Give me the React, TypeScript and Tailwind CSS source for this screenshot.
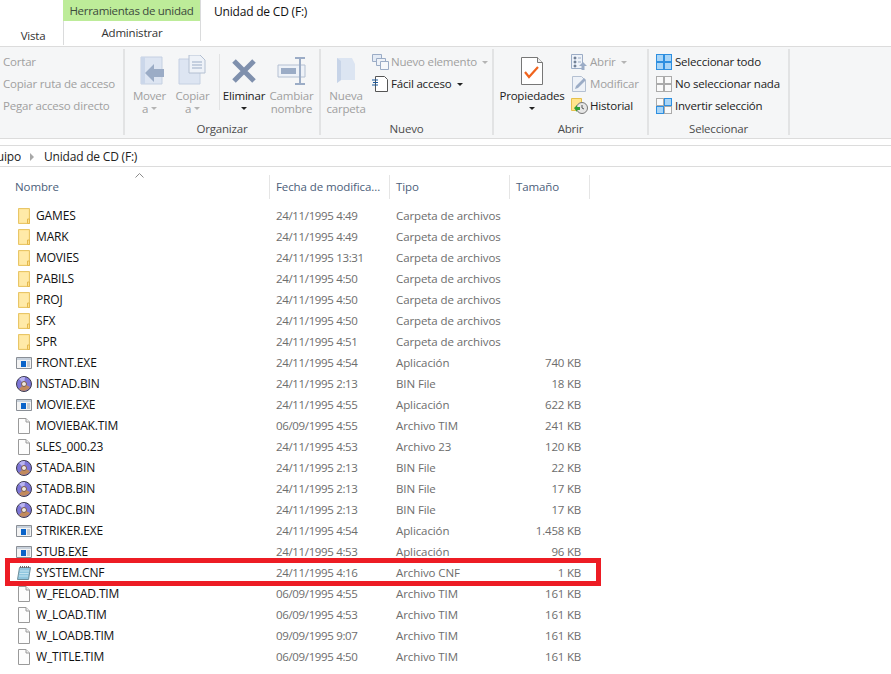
import React from "react";

type Kind = "folder" | "exe" | "disc" | "file" | "note";

interface Row {
  name: string;
  date: string;
  type: string;
  size?: string;
  kind: Kind;
}

const rows: Row[] = [
  { name: "GAMES", date: "24/11/1995 4:49", type: "Carpeta de archivos", kind: "folder" },
  { name: "MARK", date: "24/11/1995 4:49", type: "Carpeta de archivos", kind: "folder" },
  { name: "MOVIES", date: "24/11/1995 13:31", type: "Carpeta de archivos", kind: "folder" },
  { name: "PABILS", date: "24/11/1995 4:50", type: "Carpeta de archivos", kind: "folder" },
  { name: "PROJ", date: "24/11/1995 4:50", type: "Carpeta de archivos", kind: "folder" },
  { name: "SFX", date: "24/11/1995 4:50", type: "Carpeta de archivos", kind: "folder" },
  { name: "SPR", date: "24/11/1995 4:51", type: "Carpeta de archivos", kind: "folder" },
  { name: "FRONT.EXE", date: "24/11/1995 4:54", type: "Aplicación", size: "740 KB", kind: "exe" },
  { name: "INSTAD.BIN", date: "24/11/1995 2:13", type: "BIN File", size: "18 KB", kind: "disc" },
  { name: "MOVIE.EXE", date: "24/11/1995 4:55", type: "Aplicación", size: "622 KB", kind: "exe" },
  { name: "MOVIEBAK.TIM", date: "06/09/1995 4:55", type: "Archivo TIM", size: "241 KB", kind: "file" },
  { name: "SLES_000.23", date: "24/11/1995 4:53", type: "Archivo 23", size: "120 KB", kind: "file" },
  { name: "STADA.BIN", date: "24/11/1995 2:13", type: "BIN File", size: "22 KB", kind: "disc" },
  { name: "STADB.BIN", date: "24/11/1995 2:13", type: "BIN File", size: "17 KB", kind: "disc" },
  { name: "STADC.BIN", date: "24/11/1995 2:13", type: "BIN File", size: "17 KB", kind: "disc" },
  { name: "STRIKER.EXE", date: "24/11/1995 4:54", type: "Aplicación", size: "1.458 KB", kind: "exe" },
  { name: "STUB.EXE", date: "24/11/1995 4:53", type: "Aplicación", size: "96 KB", kind: "exe" },
  { name: "SYSTEM.CNF", date: "24/11/1995 4:16", type: "Archivo CNF", size: "1 KB", kind: "note" },
  { name: "W_FELOAD.TIM", date: "06/09/1995 4:55", type: "Archivo TIM", size: "161 KB", kind: "file" },
  { name: "W_LOAD.TIM", date: "06/09/1995 4:53", type: "Archivo TIM", size: "161 KB", kind: "file" },
  { name: "W_LOADB.TIM", date: "09/09/1995 9:07", type: "Archivo TIM", size: "161 KB", kind: "file" },
  { name: "W_TITLE.TIM", date: "06/09/1995 4:50", type: "Archivo TIM", size: "161 KB", kind: "file" },
];

const FileIcon = ({ kind }: { kind: Kind }) => {
  if (kind === "folder") {
    return (
      <svg width="16" height="16" viewBox="0 0 16 16">
        <path d="M2.5.5h11v15h-11z" fill="#ffe08c" stroke="#e8c668" />
        <path d="M3.5 1.5h9v13h-9z" fill="#ffeaa8" />
        <path d="M11.5 11h2v4.5h-2z" fill="#ffe08c" stroke="#e4b94e" />
      </svg>
    );
  }
  if (kind === "exe") {
    return (
      <svg width="16" height="16" viewBox="0 0 16 16">
        <path d="M.5 2.5h15v11H.5z" fill="#f3f3f3" stroke="#8a8f96" />
        <path d="M1 3h14v2H1z" fill="#c9d2dc" />
        <path d="M5 6h5v6H5z" fill="#0a63c9" />
        <path d="M11 7h3M11 9h3M11 11h3" stroke="#9aa3ad" />
      </svg>
    );
  }
  if (kind === "disc") {
    return (
      <svg width="16" height="16" viewBox="0 0 16 16">
        <circle cx="8" cy="8" r="7.5" fill="#7d76d8" stroke="#3c3a4c" />
        <path d="M8 8 14 11A7 7 0 0 1 3 13Z" fill="#c28a5c" />
        <path d="M8 8 3 3A7 7 0 0 1 9 1Z" fill="#b9b4f0" />
        <circle cx="8" cy="8" r="2.5" fill="#efe8e0" stroke="#7a5a48" />
      </svg>
    );
  }
  if (kind === "note") {
    return (
      <svg width="16" height="16" viewBox="0 0 16 16">
        <path d="M3.5 2.5h11l-2 12H1.5z" fill="#8fc6de" stroke="#6f8f9c" />
        <path d="M4 6h9M3.5 8.5h9M3 11h9" stroke="#c4e4f0" />
        <path d="M4 2h10" stroke="#6a6a6a" strokeWidth="2" strokeDasharray="1 1" />
      </svg>
    );
  }
  return (
    <svg width="16" height="16" viewBox="0 0 16 16">
      <path d="M2.5.5h7.5l3.5 3.5v11.5h-11z" fill="#fdfdfd" stroke="#9a9a9a" />
      <path d="M10 .5v3.5h3.5" fill="#f0f0f0" stroke="#9a9a9a" />
    </svg>
  );
};

const Caret = ({ on }: { on?: boolean }) => (
  <span
    className={`inline-block w-0 h-0 border-x-[3px] border-x-transparent border-t-[3px] ${on ? "border-t-[#222222]" : "border-t-[#b4b4b4]"}`}
  />
);

const Group = ({ label, width, children }: { label?: string; width: string; children: React.ReactNode }) => (
  <div className={`${width} h-[86px] mt-[2px] border-r-2 border-[#e2e3e4] flex flex-col shrink-0`}>
    <div className="h-[72px] shrink-0 flex overflow-hidden">{children}</div>
    <div className="text-center text-[#4c4c4c] leading-[16px]">{label}</div>
  </div>
);

const Small = ({ icon, text, on, caret }: { icon?: React.ReactNode; text: string; on?: boolean; caret?: boolean }) => (
  <div className={`h-[22px] flex items-center whitespace-nowrap ${on ? "text-[#222222]" : "text-[#a0a0a0]"}`}>
    {icon && <span className="w-[18px] h-[16px] mr-[2px] flex items-center justify-center shrink-0">{icon}</span>}
    <span>{text}</span>
    {caret && <span className="ml-[5px] flex"><Caret on={on} /></span>}
  </div>
);

const Large = ({ icon, line1, line2, caret, on, width }: { icon: React.ReactNode; line1: string; line2?: string; caret?: boolean; on?: boolean; width: string }) => (
  <div className={`${width} flex flex-col items-center shrink-0 pt-[5px] leading-[13px] whitespace-nowrap ${on ? "text-[#222222]" : "text-[#a0a0a0]"}`}>
    <div className="h-[34px] flex items-center justify-center">{icon}</div>
    <div className="mt-[1px]">{line1}</div>
    <div className="h-[13px] flex items-center gap-[3px]">
      {line2 && <span>{line2}</span>}
      {caret && <Caret on={on} />}
    </div>
  </div>
);

const Grid4 = ({ cells }: { cells: boolean[] }) => (
  <svg width="16" height="16" viewBox="0 0 16 16">
    {[0, 1, 2, 3].map((i) => {
      const x = i % 2 === 0 ? 0.5 : 8.5;
      const y = i < 2 ? 0.5 : 8.5;
      return (
        <rect
          key={i}
          x={x}
          y={y}
          width="7"
          height="7"
          fill={cells[i] ? "#a9d5f7" : "#fafafa"}
          stroke={cells[i] ? "#2e8fe0" : "#ababab"}
        />
      );
    })}
  </svg>
);

const App = () => {
  return (
    <div className="relative w-[891px] h-[674px] bg-white overflow-hidden text-[11.5px] font-['Open_Sans','Noto_Sans',sans-serif] tracking-[-0.2px]">
      {/* title and tabs */}
      <div className="h-[46px] flex">
        <div className="w-[63px] pt-[28px] pl-[3px] text-center text-[#333333] leading-[16px]">Vista</div>
        <div className="w-[138px] h-[41px] border-r border-[#dadbdc] flex flex-col">
          <div className="h-[23px] bg-[#bdec99] text-center text-[#3c4a3c] leading-[21px] tracking-[-0.3px]">Herramientas de unidad</div>
          <div className="flex-1 border-l border-[#dadbdc] text-center text-[#333333] leading-[24px]">Administrar</div>
        </div>
        <div className="ml-[13px] pt-[3px] text-[12px] text-[#111111] leading-[18px]">Unidad de CD (F:)</div>
      </div>

      {/* ribbon */}
      <div className="h-[93px] bg-[#f5f6f7] border-y border-[#dcdcdc] flex">
        <Group width="w-[125px]" label="">
          <div className="pl-[3px] pt-[2px]">
            <Small text="Cortar" />
            <Small text="Copiar ruta de acceso" />
            <Small text="Pegar acceso directo" />
          </div>
        </Group>

        <Group width="w-[196px]" label="Organizar">
          <div className="flex">
            <Large
              width="w-[49px]"
              line1="Mover"
              line2="a"
              caret
              icon={
                <svg width="30" height="32" viewBox="0 0 30 32">
                  <path d="M6 2h21v27H6z" fill="#dde5f2" stroke="#c5d0e2" />
                  <path d="M6 2v27h4V2z" fill="#cbd7ea" />
                  <path d="M29 14h-10V9l-9 9 9 9v-5h10z" fill="#9bacc6" />
                </svg>
              }
            />
            <Large
              width="w-[37px]"
              line1="Copiar"
              line2="a"
              caret
              icon={
                <svg width="30" height="32" viewBox="0 0 30 32">
                  <path d="M1 4h21v25H1z" fill="#dde5f2" stroke="#c5d0e2" />
                  <path d="M11 0h11l5 5v13H11z" fill="#eef2f8" stroke="#b4c0d2" />
                  <path d="M14 7h10M14 10h10M14 13h10" stroke="#9bacc6" />
                </svg>
              }
            />
            <div className="w-[1px] h-[56px] bg-[#e2e3e4] ml-[8px] mt-[5px]" />
            <Large
              on
              width="w-[48px]"
              line1="Eliminar"
              caret
              icon={
                <svg width="26" height="26" viewBox="0 0 26 26">
                  <path d="M3 3l20 20M23 3 3 23" stroke="#7f90ad" strokeWidth="5" />
                </svg>
              }
            />
            <Large
              width="w-[47px]"
              line1="Cambiar"
              line2="nombre"
              icon={
                <svg width="30" height="28" viewBox="0 0 30 28">
                  <path d="M1 8h27v12H1z" fill="#eef2f8" stroke="#b4c0d2" />
                  <path d="M4 11h15v6H4z" fill="#9bacc6" />
                  <path d="M23 1v26M18 1h10M18 27h10" stroke="#9bacc6" strokeWidth="2" />
                </svg>
              }
            />
          </div>
        </Group>

        <Group width="w-[173px]" label="Nuevo">
          <Large
            width="w-[50px]"
            line1="Nueva"
            line2="carpeta"
            icon={
              <svg width="22" height="30" viewBox="0 0 22 30">
                <path d="M2 2h15l3 6v16H6l-4 3z" fill="#dce5f2" />
                <path d="M2 2l4 3v19l-4 3z" fill="#c7d4e8" />
              </svg>
            }
          />
          <div className="pt-[2px]">
            <Small
              text="Nuevo elemento"
              caret
              icon={
                <svg width="17" height="16" viewBox="0 0 17 16">
                  <path d="M.5.5h9v7h-9z" fill="#e4ebf5" stroke="#9bacc6" />
                  <path d="M4.5 4.5h9v7h-9z" fill="#eef2f8" stroke="#9bacc6" />
                  <path d="M8.5 7.5h8v8h-8z" fill="#f6f8fb" stroke="#9bacc6" />
                </svg>
              }
            />
            <Small
              on
              text="Fácil acceso"
              caret
              icon={
                <svg width="17" height="16" viewBox="0 0 17 16">
                  <path d="M3.5.5h9l3 3v12h-12z" fill="#ffffff" stroke="#555555" />
                  <path d="M0 4h6M1 6.5h5M0 9h6" stroke="#1d5a9c" />
                </svg>
              }
            />
          </div>
        </Group>

        <Group width="w-[155px]" label="Abrir">
          <Large
            on
            width="w-[76px]"
            line1="Propiedades"
            caret
            icon={
              <svg width="22" height="28" viewBox="0 0 22 28">
                <path d="M.5.5h16l5 5v22H.5z" fill="#ffffff" stroke="#777777" />
                <path d="M16.5.5v5h5" fill="#eeeeee" stroke="#777777" />
                <path d="M4 15l4 5 9-10" fill="none" stroke="#f0641e" strokeWidth="2.2" />
              </svg>
            }
          />
          <div className="pt-[2px]">
            <Small
              text="Abrir"
              caret
              icon={
                <svg width="16" height="16" viewBox="0 0 16 16">
                  <path d="M.5.5h11v14H.5z" fill="#eef2f8" stroke="#9bacc6" />
                  <path d="M3 3h2v2H3zM3 7h2v2H3zM3 11h2v2H3zM7 4h3M7 8h3" stroke="#9bacc6" />
                  <path d="M12 8l4 4h-2.5v4h-3v-4H8z" fill="#9bacc6" />
                </svg>
              }
            />
            <Small
              text="Modificar"
              icon={
                <svg width="16" height="16" viewBox="0 0 16 16">
                  <path d="M1.5.5h9l4 4v11h-13z" fill="#eef2f8" stroke="#b4c0d2" />
                  <path d="M4 13l1-3 8-8 2 2-8 8z" fill="#9bacc6" />
                </svg>
              }
            />
            <Small
              on
              text="Historial"
              icon={
                <svg width="17" height="16" viewBox="0 0 17 16">
                  <path d="M.5.5h10v12H.5z" fill="#ffe48c" stroke="#e6c04c" />
                  <circle cx="11" cy="10" r="5.5" fill="#e6e6e6" stroke="#777777" />
                  <path d="M11 7v3l2 1" fill="none" stroke="#555555" />
                  <path d="M3 10l3-3v2h3v3H6v2z" fill="#2f9e36" />
                </svg>
              }
            />
          </div>
        </Group>

        <Group width="w-[141px]" label="Seleccionar">
          <div className="pl-[6px] pt-[2px]">
            <Small on text="Seleccionar todo" icon={<Grid4 cells={[true, true, true, true]} />} />
            <Small on text="No seleccionar nada" icon={<Grid4 cells={[false, false, false, false]} />} />
            <Small on text="Invertir selección" icon={<Grid4 cells={[false, true, true, false]} />} />
          </div>
        </Group>
      </div>

      {/* address bar */}
      <div className="mt-[6px] h-[22px] pt-[1px] border-y border-[#dcdcdc] flex items-center text-[#222222] text-[12px]">
        <span className="w-[21px] overflow-hidden flex justify-end">uipo</span>
        <svg className="ml-[8px] mr-[9px]" width="6" height="8" viewBox="0 0 6 8">
          <path d="M1 0l4 4-4 4z" fill="#a8a8a8" />
        </svg>
        <span>Unidad de CD (F:)</span>
      </div>

      {/* column headers */}
      <div className="relative h-[38px] text-[#4c607a] flex tracking-[-0.1px]">
        <svg className="absolute left-[135px] top-[6px]" width="9" height="5" viewBox="0 0 9 5">
          <path d="M.5 4.5l4-4 4 4" fill="none" stroke="#8a8a8a" />
        </svg>
        <div className="w-[269px] pl-[15px] pt-[12px] leading-[16px]">Nombre</div>
        <div className="w-[120px] h-[24px] mt-[8px] pl-[6px] pt-[4px] border-l border-[#e5e5e5] leading-[16px]">Fecha de modifica...</div>
        <div className="w-[120px] h-[24px] mt-[8px] pl-[6px] pt-[4px] border-l border-[#e5e5e5] leading-[16px]">Tipo</div>
        <div className="w-[81px] h-[24px] mt-[8px] pl-[6px] pt-[4px] border-x border-[#e5e5e5] leading-[16px]">Tamaño</div>
      </div>

      {/* file rows */}
      <div>
        {rows.map((row) => (
          <div key={row.name} className="h-[21px] flex items-center">
            <div className="w-[270px] flex items-center pl-[16px] text-[12px] tracking-[-0.15px] text-[#111111]">
              <FileIcon kind={row.kind} />
              <span className="ml-[4px]">{row.name}</span>
            </div>
            <div className="w-[120px] pl-[6px] text-[#6d6d6d] tracking-[-0.35px]">{row.date}</div>
            <div className="w-[120px] pl-[6px] text-[#6d6d6d] tracking-[-0.1px]">{row.type}</div>
            <div className="w-[71px] text-right text-[#6d6d6d]">{row.size}</div>
          </div>
        ))}
      </div>

      {/* red highlight drawn over the screenshot */}
      <div className="absolute left-[5px] top-[558px] w-[596px] h-[28px] border-[5px] border-[#ed1c24]" />
    </div>
  );
};

export default App;
